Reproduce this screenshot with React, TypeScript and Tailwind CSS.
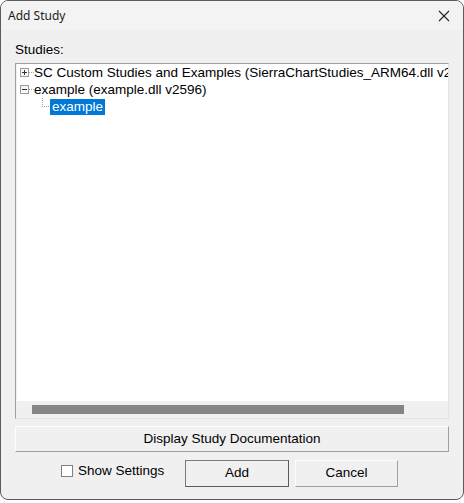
import React from "react";

function Expander({ open }: { open: boolean }) {
  return (
    <svg width="17" height="17" viewBox="0 0 17 17" className="shrink-0">
      <rect x="3.5" y="4.5" width="8" height="8" fill="#f7f7f7" stroke="#9a9a9a" />
      <line x1="5" y1="8.5" x2="10" y2="8.5" stroke="#333" />
      {!open && <line x1="7.5" y1="6" x2="7.5" y2="11" stroke="#333" />}
      <line x1="12" y1="8.5" x2="17" y2="8.5" stroke="#a0a0a0" strokeDasharray="1 1" />
    </svg>
  );
}

export default function App() {
  return (
    <div className="w-[464px] h-[503px] bg-white font-['Liberation_Sans',Arial,sans-serif] text-[13.5px] text-black">
      <div className="w-[464px] h-[500px] rounded-[8px] border border-[#5c5c5c] bg-[#f0f0f0] flex flex-col overflow-hidden">
        {/* Title bar */}
        <div className="h-[29px] bg-[#f3f3f3] flex items-center justify-between pl-[7px] pr-[10px] shrink-0">
          <span className="font-['Noto_Sans',sans-serif] text-[12px] text-[#1b1b1b] leading-none mt-[1px]">Add Study</span>
          <svg width="12" height="12" viewBox="0 0 12 12" className="mr-[3px] mt-[1px]">
            <path d="M1 1 L11 11 M11 1 L1 11" stroke="#222" strokeWidth="1.1" />
          </svg>
        </div>
        {/* Body */}
        <div className="flex flex-col px-[14px]">
          <div className="h-[16px] leading-[16px] mt-[12px]">Studies:</div>
          {/* Tree box */}
          <div className="mt-[5px] h-[356px] border-t border-l border-[#a0a0a0] border-r border-b border-r-[#e3e3e3] border-b-[#e3e3e3] flex flex-col">
            <div className="flex-1 bg-white border-l border-[#f0f0f0] overflow-hidden flex flex-col">
              <div className="h-[17px] flex items-center whitespace-nowrap">
                <Expander open={false} />
                <span className="leading-[17px]">SC Custom Studies and Examples (SierraChartStudies_ARM64.dll v2596)</span>
              </div>
              <div className="h-[17px] flex items-center whitespace-nowrap">
                <Expander open={true} />
                <span className="leading-[17px]">example (example.dll v2596)</span>
              </div>
              <div className="h-[17px] flex items-center whitespace-nowrap">
                <svg width="33" height="17" viewBox="0 0 33 17" className="shrink-0">
                  <line x1="25.5" y1="0" x2="25.5" y2="8.5" stroke="#a0a0a0" strokeDasharray="1 1" />
                  <line x1="25" y1="8.5" x2="33" y2="8.5" stroke="#a0a0a0" strokeDasharray="1 1" />
                </svg>
                <span className="h-[16px] leading-[16px] px-[2px] bg-[#0078d7] text-white">example</span>
              </div>
            </div>
            {/* Horizontal scrollbar */}
            <div className="h-[17px] bg-[#f0f0f0] flex items-center pl-[16px] pr-[44px] shrink-0">
              <div className="h-[9px] flex-1 bg-[#858585]" />
            </div>
          </div>
          {/* Display Study Documentation */}
          <button className="mt-[7px] h-[26px] w-full bg-[#f0f0f0] border-t border-l border-t-[#fdfdfd] border-l-[#fdfdfd] border-r border-b border-r-[#a0a0a0] border-b-[#a0a0a0] flex items-center justify-center">
            Display Study Documentation
          </button>
          {/* Bottom row */}
          <div className="mt-[8px] flex items-start">
            <div className="ml-[46px] w-[124px] flex items-center mt-[3px]">
              <div className="w-[12px] h-[12px] border border-[#808080] bg-white shrink-0" />
              <span className="ml-[5px] leading-[16px]">Show Settings</span>
            </div>
            <button className="w-[104px] h-[27px] bg-[#f0f0f0] border border-[#7a7a7a] border-b-[#5a5a5a] border-r-[#5a5a5a] flex items-center justify-center">
              Add
            </button>
            <button className="ml-[6px] w-[103px] h-[27px] bg-[#f0f0f0] border-t border-l border-t-[#fdfdfd] border-l-[#fdfdfd] border-r border-b border-r-[#a0a0a0] border-b-[#a0a0a0] flex items-center justify-center">
              Cancel
            </button>
          </div>
        </div>
      </div>
    </div>
  );
}
